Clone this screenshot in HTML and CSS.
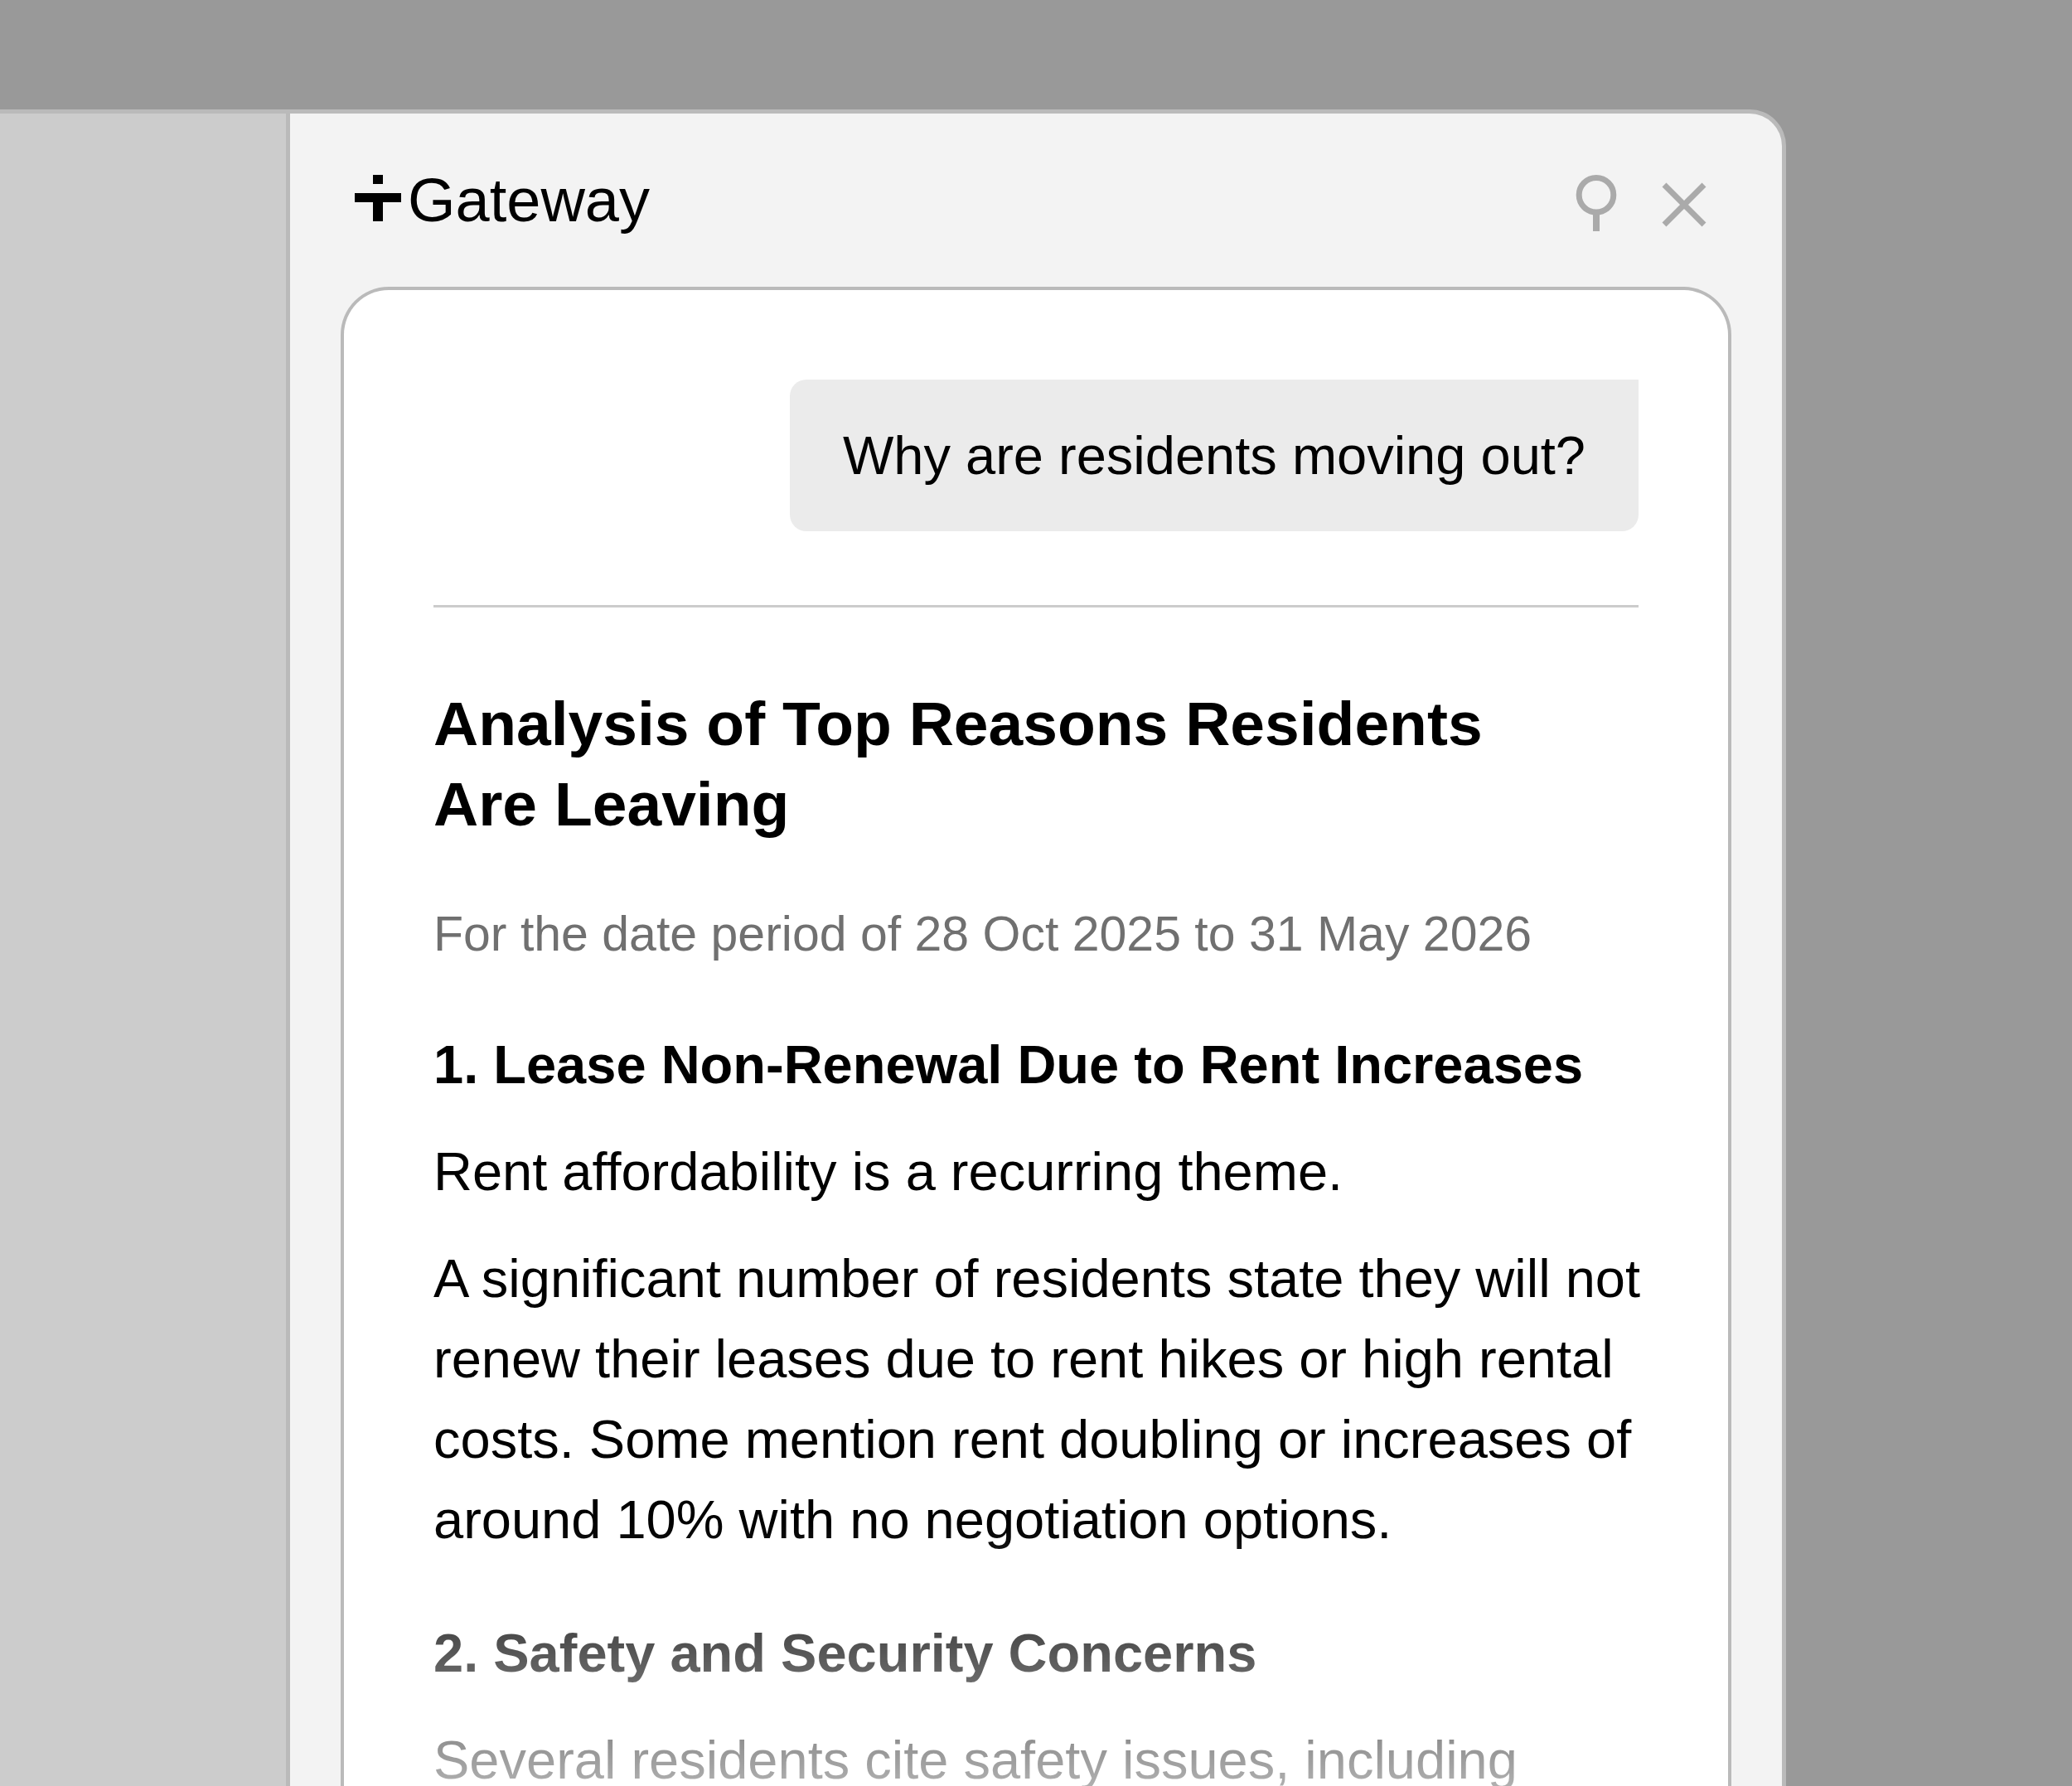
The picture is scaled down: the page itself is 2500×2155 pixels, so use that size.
FILE: index.html
```html
<!DOCTYPE html>
<html lang="en">
<head>
  <meta charset="utf-8">
  <meta name="viewport" content="width=device-width, initial-scale=1">
  <title>Gateway</title>
  <link rel="stylesheet" href="styles.css">
</head>
<body>
  <div class="window">
    <main class="workspace"></main>
    <aside class="panel">
      <header class="panel-header">
        <div class="brand">
          <svg class="brand-mark" viewBox="0 0 56 56" aria-hidden="true">
            <path d="M22 0h12v11H22zM0 22h56v11H34v23H22V33H0z"/>
          </svg>
          <span class="brand-name">Gateway</span>
        </div>
        <div class="actions">
          <button class="icon-button" type="button" aria-label="Pin panel">
            <svg class="icon" viewBox="0 0 72 72" aria-hidden="true">
              <circle cx="36" cy="24.3" r="20.8"/>
              <path class="icon-stem" d="M36 46v22"/>
            </svg>
          </button>
          <button class="icon-button" type="button" aria-label="Close panel">
            <svg class="icon" viewBox="0 0 72 72" aria-hidden="true">
              <path d="M12 12l48 48M60 12L12 60"/>
            </svg>
          </button>
        </div>
      </header>
      <section class="conversation">
        <p class="question">Why are residents moving out?</p>
        <hr class="divider">
        <article class="answer">
          <h1 class="title">Analysis of Top Reasons Residents<br>Are Leaving</h1>
          <p class="period">For the date period of 28 Oct 2025 to 31 May 2026</p>
          <h2 class="reason">1. Lease Non-Renewal Due to Rent Increases</h2>
          <p class="text">Rent affordability is a recurring theme.</p>
          <p class="text">A significant number of residents state they will not renew their leases due to rent hikes or high rental costs. Some mention rent doubling or increases of around 10% with no negotiation options.</p>
          <h2 class="reason">2. Safety and Security Concerns</h2>
          <p class="text">Several residents cite safety issues, including</p>
        </article>
      </section>
    </aside>
  </div>
</body>
</html>
```
FILE: styles.css
```css
* {
  box-sizing: border-box;
}

body {
  height: 100vh;
  margin: 0;
  padding: 132px 345px 0 0;
  overflow: hidden;
  background: #999;
  color: #000;
  font-family: "Liberation Sans", Arial, sans-serif;
}

.window {
  display: flex;
  height: 100%;
  border: solid #bababa;
  border-width: 5px 5px 0 0;
  border-radius: 0 44px 0 0;
  overflow: hidden;
  background: #f3f3f3;
}

.workspace {
  flex: 1;
  background: #ccc;
}

.panel {
  display: flex;
  flex-direction: column;
  flex: 0 0 1805px;
  min-height: 0;
  padding: 0 61px;
  border-left: 5px solid #bababa;
}

.panel-header {
  display: flex;
  flex: none;
  align-items: flex-start;
  justify-content: space-between;
  height: 209px;
  padding: 68px 21px 0 17px;
}

.brand {
  display: flex;
  align-items: flex-start;
  gap: 8px;
}

.brand-mark {
  width: 56px;
  height: 56px;
  margin-top: 6px;
}

.brand-name {
  font-size: 74px;
  line-height: 74px;
}

.actions {
  display: flex;
  gap: 34px;
  padding-top: 6px;
}

.icon-button {
  width: 72px;
  height: 72px;
  padding: 0;
  border: 0;
  background: none;
}

.icon {
  display: block;
  width: 72px;
  height: 72px;
  fill: none;
  stroke: #aaa;
  stroke-width: 7;
}

.icon-stem {
  stroke-width: 8;
}

.conversation {
  flex: 1;
  min-height: 0;
  padding: 108px 108px 0;
  border: solid #bababa;
  border-width: 4px 4px 0;
  border-radius: 58px 58px 0 0;
  overflow: hidden;
  background: #fff;
}

.question {
  width: fit-content;
  margin: 0 0 0 auto;
  padding: 43px 64px;
  border-radius: 20px 0 20px 20px;
  background: #ebebeb;
  font-size: 65px;
  line-height: 97px;
}

.divider {
  height: 3px;
  margin: 89px 0 92px;
  border: 0;
  background: #ccc;
}

.answer {
  margin-right: -20px;
  -webkit-mask-image: linear-gradient(#000 1012px, transparent 1474px);
  mask-image: linear-gradient(#000 1012px, transparent 1474px);
  mask-size: 100% 1474px;
  mask-repeat: no-repeat;
}

.title {
  margin: 0 0 60px;
  font-size: 75px;
  line-height: 97px;
}

.period {
  margin: 0 0 60px;
  color: #707070;
  font-size: 59px;
  line-height: 97px;
}

.reason {
  margin: 60px 0 32px;
  font-size: 65px;
  line-height: 97px;
}

.text {
  margin: 0 0 32px;
  font-size: 65px;
  line-height: 97px;
}

.text + .reason {
  margin-top: 64px;
}
```
